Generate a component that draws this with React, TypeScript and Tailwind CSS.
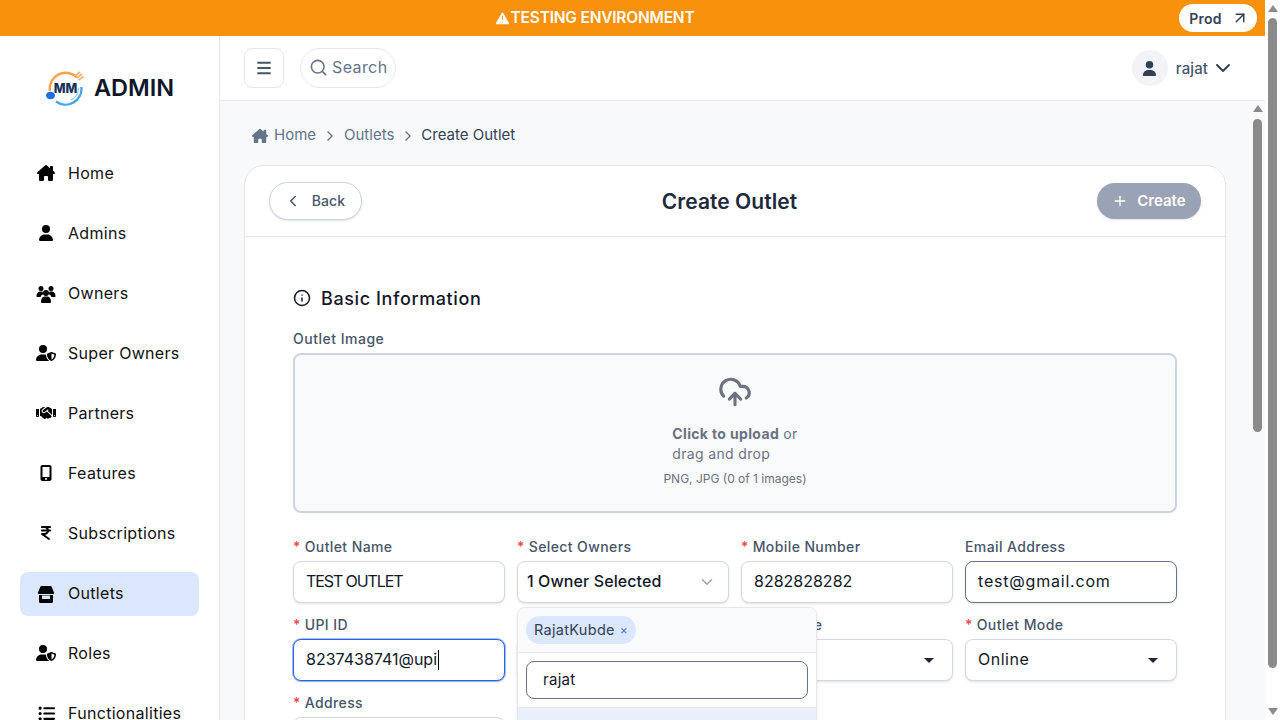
import { ArrowUpRight, ChevronDown, ChevronLeft, ChevronRight, CloudUpload, Info, Menu, Plus, Search, TriangleAlert } from "lucide-react";
import { FaHandshake, FaHouseChimney, FaIndianRupeeSign, FaListUl, FaMobileScreenButton, FaUser, FaUserShield } from "react-icons/fa6";
import type { ReactNode } from "react";

function StoreIcon() {
  return (
    <svg width="20" height="20" viewBox="0 0 20 20" fill="currentColor">
      <path d="M5.5 3h9q.8 0 1.1.7l2.4 5.8q.4 1.5-1 1.5H3q-1.4 0-1-1.5l2.4-5.8Q4.700 3 5.500 3z" />
      <path fillRule="evenodd" d="M3 12h14v6.500q0 1.500-1.500 1.500h-11Q3 20 3 18.500zM6 12.500v3.500h8v-3.500z" />
    </svg>
  );
}

function OwnersIcon() {
  return (
    <svg width="20" height="20" viewBox="0 0 20 20" fill="currentColor">
      <circle cx="5" cy="5.500" r="2.500" />
      <circle cx="15" cy="5.500" r="2.500" />
      <circle cx="10" cy="10" r="3" />
      <path d="M0.500 13q0-3.500 3-4.500h3q.3 1.500 1 2.500-2.500 1-3 3H1q-.5 0-.5-1z" />
      <path d="M19.500 13q0-3.500-3-4.500h-3q-.3 1.500-1 2.500 2.500 1 3 3h3.500q.5 0 .5-1z" />
      <path d="M5 19q0-5 3.500-5.500h3Q15 14 15 19q0 1-1 1H6q-1 0-1-1z" />
    </svg>
  );
}

const navItems = [
  { label: "Home", icon: <FaHouseChimney size={18} /> },
  { label: "Admins", icon: <FaUser size={16} /> },
  { label: "Owners", icon: <OwnersIcon /> },
  { label: "Super Owners", icon: <FaUserShield size={20} /> },
  { label: "Partners", icon: <FaHandshake size={20} /> },
  { label: "Features", icon: <FaMobileScreenButton size={16} /> },
  { label: "Subscriptions", icon: <FaIndianRupeeSign size={16} /> },
  { label: "Outlets", icon: <StoreIcon />, active: true },
  { label: "Roles", icon: <FaUserShield size={20} /> },
  { label: "Functionalities", icon: <FaListUl size={17} /> },
];

function Logo() {
  return (
    <svg width="40" height="36" viewBox="0 0 40 36" className="shrink-0">
      <path d="M4.800 21 A16 16 0 0 1 32 7.500" fill="none" stroke="#f9a347" strokeWidth="2.400" />
      <path d="M36.400 17 A16 16 0 0 1 11 31.500" fill="none" stroke="#45a3f2" strokeWidth="2.400" />
      <path d="M33.500 18 A13.500 13.500 0 0 1 26 30" fill="none" stroke="#7cc0f6" strokeWidth="1" />
      <path d="M30 6 L35 2 M32 8 L37 4 M33.500 10 L38.500 6.500" stroke="#f8b27c" strokeWidth="1.800" />
      <ellipse cx="5.500" cy="25.500" rx="4.500" ry="3.800" fill="#1d6fe8" />
      <text x="20.500" y="22.500" textAnchor="middle" fontSize="12.500" fontWeight="800" fill="#14305c" fontFamily="Inter, sans-serif">MM</text>
    </svg>
  );
}

function Field({
  label,
  required,
  focus,
  children,
  chevron,
  labelClass = "tracking-[0.4px]",
  valueClass = "",
}: {
  label?: string;
  required?: boolean;
  focus?: "blue" | "dark";
  children?: ReactNode;
  chevron?: ReactNode;
  labelClass?: string;
  valueClass?: string;
}) {
  const border =
    focus === "blue"
      ? "border-[#2563eb] ring-1 ring-[#2563eb]/40"
      : focus === "dark"
        ? "border-[#64748b]"
        : "border-[#d5d9e2]";
  return (
    <div>
      <div className={`h-[18px] text-[14px] leading-[18px] font-medium text-[#475569] ${labelClass}`}>
        {required && label && <span className="text-[#ef4444] mr-1">*</span>}
        {label}
      </div>
      <div className={`mt-[5px] h-[42px] flex items-center justify-between rounded-lg border bg-white pl-[12px] pr-[14px] text-[16px] text-[#111827] shadow-sm ${border}`}>
        <div className={`flex items-center pb-[2px] ${valueClass}`}>{children}</div>
        {chevron}
      </div>
    </div>
  );
}

function SelectArrow() {
  return <div className="mr-[4px] border-x-[5px] border-t-[5px] border-x-transparent border-t-[#1f2937]" />;
}

function ScrollArrow({ down }: { down?: boolean }) {
  return down ? (
    <div className="border-x-[5px] border-t-[7px] border-x-transparent border-t-[#8a8a8a]" />
  ) : (
    <div className="border-x-[5px] border-b-[7px] border-x-transparent border-b-[#8a8a8a]" />
  );
}

export default function App() {
  return (
    <div className="flex h-screen w-full overflow-hidden bg-white font-['Inter',sans-serif]">
      <div className="flex w-[1265px] shrink-0 flex-col">
        {/* Banner */}
        <div className="relative flex h-9 shrink-0 items-center justify-center bg-[#f8910b] pr-[77px] text-white">
          <TriangleAlert size={17} fill="white" stroke="#f8910b" strokeWidth={1.5} />
          <span className="pb-[1px] text-[15.5px] font-semibold tracking-[-0.2px]">TESTING ENVIRONMENT</span>
          <div className="absolute right-2 top-1 flex h-7 w-[78px] items-center justify-center gap-[9px] rounded-full bg-white pl-[2px] text-[14px] font-semibold tracking-[0.3px] text-[#334155]">
            Prod
            <ArrowUpRight size={18} />
          </div>
        </div>

        <div className="flex min-h-0 flex-1">
          {/* Sidebar */}
          <aside className="w-[220px] shrink-0 border-r border-[#e5e7eb] bg-white">
            <div className="flex h-[104px] items-center pl-[45px]">
              <Logo />
              <span className="ml-[9px] text-[23.5px] font-semibold text-[#0f172a]">ADMIN</span>
            </div>
            <nav className="mt-3 flex flex-col gap-4 px-5">
              {navItems.map((item) => (
                <div key={item.label} className={`flex h-11 w-[179px] items-center rounded-lg pb-[2px] pl-4 text-[16px] text-[#111] ${item.active ? "bg-[#dbe7fe]" : ""}`}>
                  <span className="flex w-5 shrink-0 justify-center text-black">{item.icon}</span>
                  <span className="ml-3 tracking-[0.3px]">{item.label}</span>
                </div>
              ))}
            </nav>
          </aside>

          <div className="flex min-w-0 flex-1 flex-col">
            {/* Topbar */}
            <header className="flex h-[65px] shrink-0 items-center border-b border-[#e5e7eb] bg-white pl-6 pr-[30px]">
              <div className="flex h-10 w-10 items-center justify-center rounded-lg border border-[#e5e7eb] text-[#475569]">
                <Menu size={18} strokeWidth={2.4} />
              </div>
              <div className="ml-4 flex h-10 w-24 items-center gap-[4px] rounded-full border border-[#e5e7eb] pb-[2px] pl-[8px] text-[16px] tracking-[0.4px] text-[#64748b]">
                <Search size={19} />
                Search
              </div>
              <div className="ml-auto flex items-center">
                <div className="flex h-9 w-9 items-center justify-center rounded-full bg-[#f1f3f7] text-[#334155]">
                  <FaUser size={15} />
                </div>
                <span className="ml-2 pt-[2px] text-[15px] font-medium tracking-[0.1px] text-[#475569]">rajat</span>
                <ChevronDown size={24} className="ml-[3px] text-[#334155]" />
              </div>
            </header>

            <div className="flex min-h-0 flex-1 bg-[#f8f9fb]">
              <main className="w-[1030px] shrink-0 px-6">
                {/* Breadcrumb */}
                <div className="flex h-[64px] items-center pl-2 pt-[5px] text-[15px] text-[#64748b]">
                  <FaHouseChimney size={16} />
                  <span className="ml-[6px]">Home</span>
                  <ChevronRight size={16} className="mx-[6px]" />
                  <span>Outlets</span>
                  <ChevronRight size={16} className="mx-[6px]" />
                  <span className="-ml-px text-[#334155]">Create Outlet</span>
                </div>

                {/* Card */}
                <div className="rounded-[20px] border border-[#e5e7eb] bg-white">
                  <div className="flex h-[71px] items-center justify-between border-b border-[#e5e7eb] px-6">
                    <div className="flex h-[38px] w-[93px] items-center justify-center gap-[10px] rounded-full border border-[#cbd5e1] bg-white pb-[1px] pr-[2px] text-[14px] font-medium tracking-[0.1px] text-[#475569] shadow-sm">
                      <ChevronLeft size={18} />
                      Back
                    </div>
                    <h1 className="pt-[1px] text-[21px] font-semibold tracking-[0.05px] text-[#1e293b]">Create Outlet</h1>
                    <div className="flex h-9 w-[104px] items-center justify-center gap-[9px] rounded-full bg-[#99a3b5] text-[15px] font-semibold text-white shadow-sm">
                      <Plus size={16} />
                      Create
                    </div>
                  </div>

                  <div className="px-12 pt-[49px]">
                    <div className="flex h-6 items-center gap-[10px] text-[18px] font-medium tracking-[0.6px] text-[#111827]">
                      <Info size={18} />
                      Basic Information
                    </div>
                    <div className="mt-[20px] h-[18px] text-[14px] leading-[18px] font-medium tracking-[0.5px] text-[#475569]">Outlet Image</div>
                    <div className="mt-[5px] flex h-40 flex-col items-center rounded-lg border-2 border-[#cbd5e1] bg-[#f8fafc] pt-[20px] text-[#6b7280]">
                      <CloudUpload size={34} strokeWidth={2.2} />
                      <div className="mt-[15px] text-[14px] leading-[20px] tracking-[0.35px]">
                        <div><span className="font-bold">Click to upload</span> or</div>
                        <div>drag and drop</div>
                      </div>
                      <div className="mt-[6px] text-[12px]">PNG, JPG (0 of 1 images)</div>
                    </div>

                    <div className="relative mt-[25px] grid grid-cols-4 gap-x-3 gap-y-[13px]">
                      <Field label="Outlet Name" required valueClass="tracking-[-1.1px]">TEST OUTLET</Field>
                      <Field label="Select Owners" required chevron={<ChevronDown size={18} className="-mr-[2px] text-[#94a3b8]" />}>
                        <span className="-ml-[3px] font-medium tracking-[0.1px]">1 Owner Selected</span>
                      </Field>
                      <Field label="Mobile Number" required>8282828282</Field>
                      <Field label="Email Address" focus="dark" valueClass="tracking-[0.8px]">test@gmail.com</Field>
                      <Field label="UPI ID" required focus="blue">
                        8237438741@upi
                        <span className="ml-[1px] mt-[2px] h-5 w-px bg-black" />
                      </Field>
                      <Field chevron={<SelectArrow />} />
                      <Field label="Outlet Type" required labelClass="tracking-[-0.7px]" chevron={<SelectArrow />} />
                      <Field label="Outlet Mode" required chevron={<SelectArrow />} valueClass="tracking-[0.5px]">Online</Field>
                      <Field label="Address" required />

                      {/* Owners dropdown */}
                      <div className="absolute left-[224px] top-[69px] z-10 h-[140px] w-[300px] overflow-hidden rounded-lg border border-[#e5e7eb] bg-white shadow-sm">
                        <div className="flex h-[45px] items-center border-b border-[#e5e7eb] bg-[#f8fafc] pl-2">
                          <div className="flex h-7 w-[110px] items-center gap-[5px] rounded-full bg-[#dbe7fe] pl-2 text-[14.5px] tracking-[0.3px] text-[#334155]">
                            RajatKubde
                            <span className="text-[12px] text-[#4f6ef7]">×</span>
                          </div>
                        </div>
                        <div className="flex h-[55px] items-center border-b border-[#e5e7eb] px-2">
                          <div className="flex h-[38px] w-full items-center rounded-lg border border-[#64748b] pl-4 text-[15px] tracking-[0.3px] text-[#111827]">rajat</div>
                        </div>
                        <div className="h-10 bg-[#eaf0fb]" />
                      </div>
                    </div>
                    <div className="h-40" />
                  </div>
                </div>
              </main>
              {/* Inner scrollbar */}
              <div className="flex w-[15px] shrink-0 flex-col items-center pt-[4px]">
                <ScrollArrow />
                <div className="mt-[7px] h-[313px] w-[9px] rounded-full bg-[#8a8a8a]" />
              </div>
            </div>
          </div>
        </div>
      </div>

      {/* Page scrollbar */}
      <div className="flex w-[15px] shrink-0 flex-col items-center pt-[5px]">
        <ScrollArrow />
        <div className="mt-[6px] h-[650px] w-[9px] rounded-full bg-[#8a8a8a]" />
        <div className="mt-[40px]"><ScrollArrow down /></div>
      </div>
    </div>
  );
}
